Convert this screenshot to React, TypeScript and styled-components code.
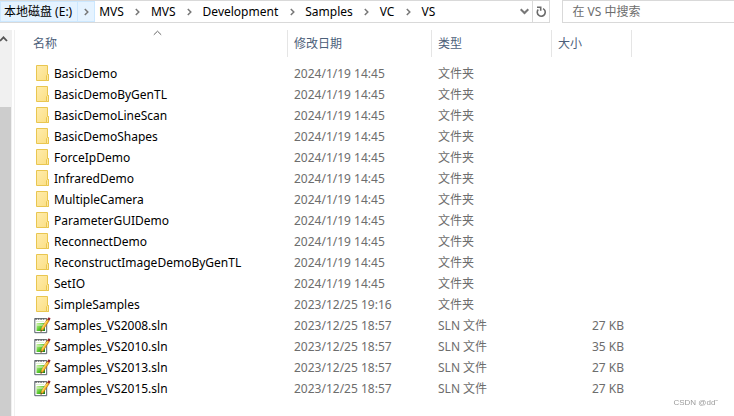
import React from "react";
import styled, { createGlobalStyle } from "styled-components";

const GlobalStyle = createGlobalStyle`
  *, *::before, *::after { box-sizing: border-box; }
  body {
    margin: 0;
    background: #fff;
    color: #000;
    font-family: "Noto Sans", "Noto Sans CJK SC", sans-serif;
    font-size: 12px;
    line-height: 20px;
  }
`;

const Explorer = styled.div`
  display: flex;
  flex-direction: column;
  min-height: 100vh;
  overflow: hidden;
`;

const TopBar = styled.header`
  display: flex;
  gap: 12px;
  height: 23px;
`;

const AddressBar = styled.div`
  display: flex;
  flex: 551 1 0;
  min-width: 0;
  border: 1px solid #d9d9d9;
  border-left-width: 0;
`;

const Crumbs = styled.nav`
  display: flex;
  flex: 1;
  min-width: 0;
`;

const Crumb = styled.div<{ $active?: boolean }>`
  display: flex;
  align-items: center;
  border: 1px solid ${(p) => (p.$active ? "#cce8ff" : "transparent")};
  background: ${(p) => (p.$active ? "#e5f3ff" : "transparent")};
`;

const CrumbLink = styled.a`
  padding: 0 5px 0 3px;
  color: #000;
  text-decoration: none;
  white-space: nowrap;
`;

const CrumbToggle = styled.button<{ $active?: boolean }>`
  display: flex;
  align-items: center;
  justify-content: center;
  align-self: stretch;
  width: 17px;
  padding: 0;
  border: 0;
  border-left: 1px solid ${(p) => (p.$active ? "#cce8ff" : "transparent")};
  background: none;
`;

const BarButton = styled.button<{ $divided?: boolean }>`
  display: flex;
  align-items: center;
  justify-content: center;
  width: 17px;
  padding: 0;
  border: 0;
  border-left: 1px solid ${(p) => (p.$divided ? "#d9d9d9" : "transparent")};
  background: none;
`;

const SearchBox = styled.label`
  display: flex;
  flex: 171 1 0;
  min-width: 0;
  border: 1px solid #d9d9d9;
  border-right: 0;
`;

const SearchInput = styled.input`
  width: 100%;
  min-width: 0;
  padding: 0 9px;
  border: 0;
  outline: 0;
  background: none;
  font: inherit;
  &::placeholder { color: #6d6d6d; opacity: 1; }
`;

const Content = styled.main`
  display: flex;
  flex: 1;
  margin-top: 7px;
`;

const ScrollTrack = styled.div`
  display: flex;
  flex-direction: column;
  width: 12px;
  background: #f0f0f0;
`;

const ScrollUp = styled.button`
  display: flex;
  justify-content: flex-start;
  height: 77px;
  padding: 6px 0 0;
  border: 0;
  background: none;
`;

const ScrollThumb = styled.div`
  flex: 1;
  width: 11px;
  background: #cdcdcd;
`;

const ListPane = styled.section`
  flex: 1;
  min-width: 0;
  margin-left: 2px;
  border-left: 1px solid #f0f0f0;
`;

const FileTable = styled.table`
  width: 100%;
  table-layout: fixed;
  border-collapse: separate;
  border-spacing: 0;
`;

const Col = styled.col<{ $width?: number }>`
  width: ${(p) => (p.$width ? `${p.$width}px` : "auto")};
`;

const HeadCell = styled.th<{ $first?: boolean }>`
  position: relative;
  height: 27px;
  padding: 0 0 0 ${(p) => (p.$first ? 18 : 6)}px;
  border-right: 1px solid #e5e5e5;
  color: #4c607a;
  font-weight: 400;
  text-align: left;
  &:last-child { border: 0; }
`;

const SortMark = styled.svg`
  position: absolute;
  top: 0;
  left: 50%;
  margin-left: 2px;
`;

const Rows = styled.tbody`
  &::before {
    content: "";
    display: table-row;
    height: 6px;
  }
`;

const Cell = styled.td<{ $right?: boolean }>`
  height: 21px;
  padding: 0 ${(p) => (p.$right ? 8 : 0)}px 0 6px;
  color: #6d6d6d;
  text-align: ${(p) => (p.$right ? "right" : "left")};
  white-space: nowrap;
`;

const NameCell = styled(Cell)`
  padding: 0 0 0 19px;
  color: #000;
`;

const FileName = styled.div`
  display: flex;
  align-items: center;
  gap: 3px;
`;

const Watermark = styled.footer`
  position: fixed;
  right: 16px;
  bottom: 6px;
  color: #9c9c9c;
  font: 8px/14px "Liberation Sans", sans-serif;
`;

const Chevron = () => (
  <svg width="5" height="8" viewBox="0 0 5 8" fill="none" stroke="#777" strokeWidth="1.5" aria-hidden="true">
    <path d="M.8 1 3.800 4 .8 7" />
  </svg>
);

const FolderIcon = () => (
  <svg width="17" height="17" viewBox="0 0 17 17" aria-hidden="true">
    <defs>
      <linearGradient id="folder" x1="0" y1="0" x2="1" y2="1">
        <stop offset="0" stopColor="#ffecac" />
        <stop offset="1" stopColor="#fbdf84" />
      </linearGradient>
    </defs>
    <path d="M2.500 .5h11v9h1v6h-12z" fill="url(#folder)" stroke="#e9c650" />
    <path d="M12.500 15.500v-5l1-1h1v6z" fill="#ffe9a2" stroke="#e9c650" />
  </svg>
);

const SolutionIcon = () => (
  <svg width="17" height="17" viewBox="0 0 17 17" aria-hidden="true">
    <defs>
      <linearGradient id="sheet" x1="0" y1="0" x2="1" y2="1">
        <stop offset="0" stopColor="#c9f29b" />
        <stop offset=".55" stopColor="#55c72c" />
        <stop offset="1" stopColor="#157a18" />
      </linearGradient>
    </defs>
    <path d="M.8 1.500h11.900v14.200H.8z" fill="#fff" stroke="#55606a" strokeWidth="1" />
    <path d="M2.500 6h8.500v8H2.500z" fill="url(#sheet)" />
    <path d="M2 4.500h8M3 8h7" stroke="#dff1d2" />
    <path d="M1 1.500l1 1.500 1.500-2 1 2 1.500-2 1 2 1.500-2 1 2 1.500-2 1 1.500" fill="none" stroke="#777" strokeWidth=".9" />
    <path d="M13.200 2.200l2 1.500-6.200 9.200-2.200 1.600.5-3z" fill="#ffc22c" stroke="#ad6715" strokeWidth=".7" />
    <path d="M12.600 4l-4.800 7.200" stroke="#ffe88a" strokeWidth=".8" />
    <path d="M13.300 2.200l1.400-2 1.900 1.300-1.400 2.200z" fill="#8f2028" />
    <path d="M6.800 14.500l.3-1.600 1 .9z" fill="#333" />
  </svg>
);

const crumbs = ["本地磁盘 (E:)", "MVS", "MVS", "Development", "Samples", "VC", "VS"];

const folders = [
  "BasicDemo", "BasicDemoByGenTL", "BasicDemoLineScan", "BasicDemoShapes",
  "ForceIpDemo", "InfraredDemo", "MultipleCamera", "ParameterGUIDemo",
  "ReconnectDemo", "ReconstructImageDemoByGenTL", "SetIO", "SimpleSamples",
];

const entries = [
  ...folders.map((name) => ({
    name,
    date: name === "SimpleSamples" ? "2023/12/25 19:16" : "2024/1/19 14:45",
    type: "文件夹",
    size: "",
  })),
  ...[["2008", "27"], ["2010", "35"], ["2013", "27"], ["2015", "27"]].map(([year, kb]) => ({
    name: `Samples_VS${year}.sln`,
    date: "2023/12/25 18:57",
    type: "SLN 文件",
    size: `${kb} KB`,
  })),
];

export default function App() {
  return (
    <Explorer>
      <GlobalStyle />
      <TopBar>
        <AddressBar>
          <Crumbs aria-label="路径">
            {crumbs.map((label, i) => (
              <Crumb key={i} $active={i === 0}>
                <CrumbLink href="#">{label}</CrumbLink>
                {i < crumbs.length - 1 && (
                  <CrumbToggle $active={i === 0} aria-label={`展开 ${label}`}>
                    <Chevron />
                  </CrumbToggle>
                )}
              </Crumb>
            ))}
          </Crumbs>
          <BarButton aria-label="历史记录">
            <svg width="9" height="7" viewBox="0 0 9 7" fill="none" stroke="#777" strokeWidth="2">
              <path d="M.7 1.200 4.500 5 8.300 1.200" />
            </svg>
          </BarButton>
          <BarButton $divided aria-label="刷新">
            <svg width="11" height="12" viewBox="0 0 11 12" fill="none" stroke="#6b6b6b" strokeWidth="1.600">
              <path d="M2.200 3.600A4 4 0 1 0 7 2.600" />
              <path d="M1 1.200h3.700v3.600" />
            </svg>
          </BarButton>
        </AddressBar>
        <SearchBox>
          <SearchInput type="search" aria-label="搜索" placeholder="在 VS 中搜索" />
        </SearchBox>
      </TopBar>
      <Content>
        <ScrollTrack>
          <ScrollUp aria-label="向上滚动">
            <svg width="8" height="6" viewBox="0 0 8 6" fill="none" stroke="#555" strokeWidth="1.800">
              <path d="M0 5 3.500 1.300 7 5" />
            </svg>
          </ScrollUp>
          <ScrollThumb />
        </ScrollTrack>
        <ListPane>
          <FileTable>
            <colgroup>
              <Col $width={273} />
              <Col $width={144} />
              <Col $width={120} />
              <Col $width={80} />
              <Col />
            </colgroup>
            <thead>
              <tr>
                <HeadCell $first aria-sort="ascending">
                  名称
                  <SortMark width="9" height="6" viewBox="0 0 9 6" fill="none" stroke="#666">
                    <path d="M.8 4.800 4.500 1.200 8.200 4.800" />
                  </SortMark>
                </HeadCell>
                <HeadCell>修改日期</HeadCell>
                <HeadCell>类型</HeadCell>
                <HeadCell>大小</HeadCell>
                <HeadCell as="td" />
              </tr>
            </thead>
            <Rows>
              {entries.map((e) => (
                <tr key={e.name}>
                  <NameCell>
                    <FileName>
                      {e.size ? <SolutionIcon /> : <FolderIcon />}
                      {e.name}
                    </FileName>
                  </NameCell>
                  <Cell>{e.date}</Cell>
                  <Cell>{e.type}</Cell>
                  <Cell $right>{e.size}</Cell>
                  <Cell />
                </tr>
              ))}
            </Rows>
          </FileTable>
        </ListPane>
      </Content>
      <Watermark>CSDN @dd˜</Watermark>
    </Explorer>
  );
}
